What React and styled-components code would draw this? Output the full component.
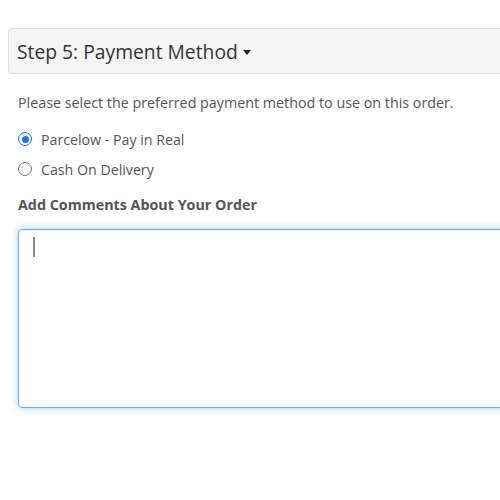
import React from 'react';
import styled, { createGlobalStyle } from 'styled-components';

const GlobalStyle = createGlobalStyle`
  html, body {
    margin: 0;
    padding: 0;
    background: #fff;
    overflow: hidden;
  }
  body {
    font-family: "Open Sans", "Liberation Sans", sans-serif;
    font-size: 14.3px;
    color: #555;
  }
`;

const Panel = styled.section`
  margin: 28px 0 0 8px;
  width: 540px;
  background: #fff;
`;

const Heading = styled.header`
  display: flex;
  align-items: center;
  gap: 5px;
  height: 46px;
  box-sizing: border-box;
  padding: 0 8px;
  background: #f5f5f5;
  border: 1px solid #ddd;
  border-radius: 4px 0 0 4px;
  font-size: 19.3px;
  color: #333;
`;

const Caret = styled.span`
  width: 0;
  height: 0;
  margin-top: 2px;
  border-left: 4.5px solid transparent;
  border-right: 4.5px solid transparent;
  border-top: 5px solid #222;
`;

const Body = styled.div`
  padding: 19px 0 40px 10px;
  display: flex;
  flex-direction: column;
`;

const Intro = styled.p`
  margin: 0 0 16px 0;
  line-height: 20px;
`;

const Option = styled.label`
  display: flex;
  align-items: center;
  gap: 9px;
  height: 20px;
  margin-bottom: ${p => (p.$last ? '16px' : '10px')};
  font-size: 14.2px;
  color: #555;
`;

const Radio = styled.span`
  width: 14px;
  height: 14px;
  box-sizing: border-box;
  border-radius: 50%;
  border: ${p => (p.$checked ? '1.5px solid #1a73e8' : '1px solid #777')};
  display: flex;
  align-items: center;
  justify-content: center;
  background: #fff;
  &::after {
    content: '';
    width: 7px;
    height: 7px;
    border-radius: 50%;
    background: ${p => (p.$checked ? '#1a73e8' : 'transparent')};
  }
`;

const Label = styled.div`
  font-weight: 700;
  font-size: 14.3px;
  line-height: 20px;
  margin-bottom: 14px;
  color: #555;
`;

const FieldWrap = styled.div`
  position: relative;
`;

const Comments = styled.textarea`
  display: block;
  width: 100%;
  height: 179px;
  box-sizing: border-box;
  border: 1px solid #66afe9;
  border-radius: 4px;
  box-shadow: inset 0 1px 1px rgba(0,0,0,.075), 0 0 8px rgba(102,175,233,.6);
  outline: none;
  resize: none;
  font-family: inherit;
  font-size: 13px;
  padding: 6px 12px;
`;

const TextCursor = styled.span`
  position: absolute;
  left: 15px;
  top: 8px;
  width: 1.5px;
  height: 20px;
  background: #888;
`;

export default function App() {
  return (
    <>
      <GlobalStyle />
      <Panel>
        <Heading>
          Step 5: Payment Method
          <Caret />
        </Heading>
        <Body>
          <Intro>Please select the preferred payment method to use on this order.</Intro>
          <Option>
            <Radio $checked />
            Parcelow - Pay in Real
          </Option>
          <Option $last>
            <Radio />
            Cash On Delivery
          </Option>
          <Label>Add Comments About Your Order</Label>
          <FieldWrap>
            <Comments />
            <TextCursor />
          </FieldWrap>
        </Body>
      </Panel>
    </>
  );
}
